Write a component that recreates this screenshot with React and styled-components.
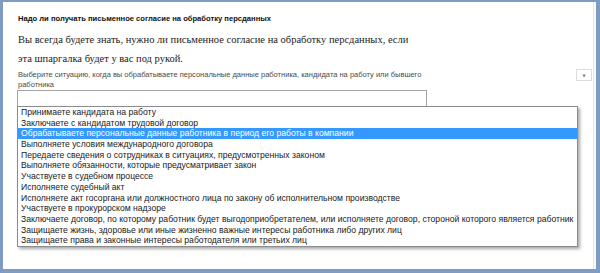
import React from 'react'
import styled, { createGlobalStyle } from 'styled-components'

const GlobalStyle = createGlobalStyle`
  html, body {
    margin: 0;
    padding: 0;
    background: #ffffff;
  }
`

const SITUATIONS = [
  'Принимаете кандидата на работу',
  'Заключаете с кандидатом трудовой договор',
  'Обрабатываете персональные данные работника в период его работы в компании',
  'Выполняете условия международного договора',
  'Передаете сведения о сотрудниках в ситуациях, предусмотренных законом',
  'Выполняете обязанности, которые предусматривает закон',
  'Участвуете в судебном процессе',
  'Исполняете судебный акт',
  'Исполняете акт госоргана или должностного лица по закону об исполнительном производстве',
  'Участвуете в прокурорском надзоре',
  'Заключаете договор, по которому работник будет выгодоприобретателем, или исполняете договор, стороной которого является работник',
  'Защищаете жизнь, здоровье или иные жизненно важные интересы работника либо других лиц',
  'Защищаете права и законные интересы работодателя или третьих лиц',
]

const Frame = styled.div`
  box-sizing: border-box;
  width: 600px;
  height: 273px;
  border-style: solid;
  border-color: #7f9bc2;
  border-width: 2px 4px 4px 3px;
  background: #ffffff;
  box-shadow: inset -2px 0 0 #fafafa, inset -3px 0 0 #e4e4e4;
  overflow: hidden;
`

const Content = styled.div`
  padding: 12px 4px 0 15px;
`

const Title = styled.div`
  font-family: 'Liberation Sans', Arial, sans-serif;
  font-weight: bold;
  font-size: 7.6px;
  line-height: 10px;
  color: #111111;
`

const Lead = styled.p`
  margin: 6px 0 0;
  font-family: 'Liberation Serif', 'Times New Roman', serif;
  font-size: 10.5px;
  line-height: 19px;
  color: #222222;
  max-width: 402px;
`

const LabelRow = styled.div`
  display: flex;
  justify-content: space-between;
  align-items: flex-start;
  margin-top: 2px;
`

const Label = styled.div`
  width: 418px;
  font-family: 'Liberation Sans', Arial, sans-serif;
  font-size: 7.5px;
  line-height: 10px;
  color: #4a4a4a;
`

const MenuButton = styled.div`
  box-sizing: border-box;
  width: 16px;
  height: 12px;
  margin-top: -1px;
  border: 1px solid #dcdcdc;
  background: #ffffff;
  display: flex;
  align-items: center;
  justify-content: center;
  font-family: 'DejaVu Sans', sans-serif;
  font-size: 4px;
  color: #777777;
`

const SelectWrap = styled.div`
  position: relative;
  margin-left: -1px;
`

const SelectBox = styled.div`
  box-sizing: border-box;
  width: 410px;
  height: 16px;
  border: 1px solid #a3a3a3;
  border-bottom: none;
  background: #ffffff;
`

const Dropdown = styled.ul`
  position: absolute;
  top: 16px;
  left: 0;
  box-sizing: border-box;
  width: 561px;
  margin: 0;
  padding: 0;
  list-style: none;
  background: #ffffff;
  border: 1px solid #8c8c8c;
  box-shadow: 2px 2px 3px rgba(0, 0, 0, 0.35);
`

const Option = styled.li`
  height: 10.7px;
  padding-left: 3px;
  font-family: 'Liberation Sans', Arial, sans-serif;
  font-size: 8.62px;
  line-height: 10.7px;
  white-space: nowrap;
  color: ${(p) => (p.selected ? '#ffffff' : '#1a1a1a')};
  background: ${(p) => (p.selected ? '#3399ff' : 'transparent')};
`

export default function App() {
  return (
    <>
      <GlobalStyle />
      <Frame>
        <Content>
          <Title>Надо ли получать письменное согласие на обработку персданных</Title>
          <Lead>
            Вы всегда будете знать, нужно ли письменное согласие на обработку
            персданных, если эта шпаргалка будет у вас под рукой.
          </Lead>
          <LabelRow>
            <Label>
              Выберите ситуацию, когда вы обрабатываете персональные данные
              работника, кандидата на работу или бывшего работника
            </Label>
            <MenuButton>▼</MenuButton>
          </LabelRow>
          <SelectWrap>
            <SelectBox />
            <Dropdown>
              {SITUATIONS.map((text, i) => (
                <Option key={i} selected={i === 2}>
                  {text}
                </Option>
              ))}
            </Dropdown>
          </SelectWrap>
        </Content>
      </Frame>
    </>
  )
}
